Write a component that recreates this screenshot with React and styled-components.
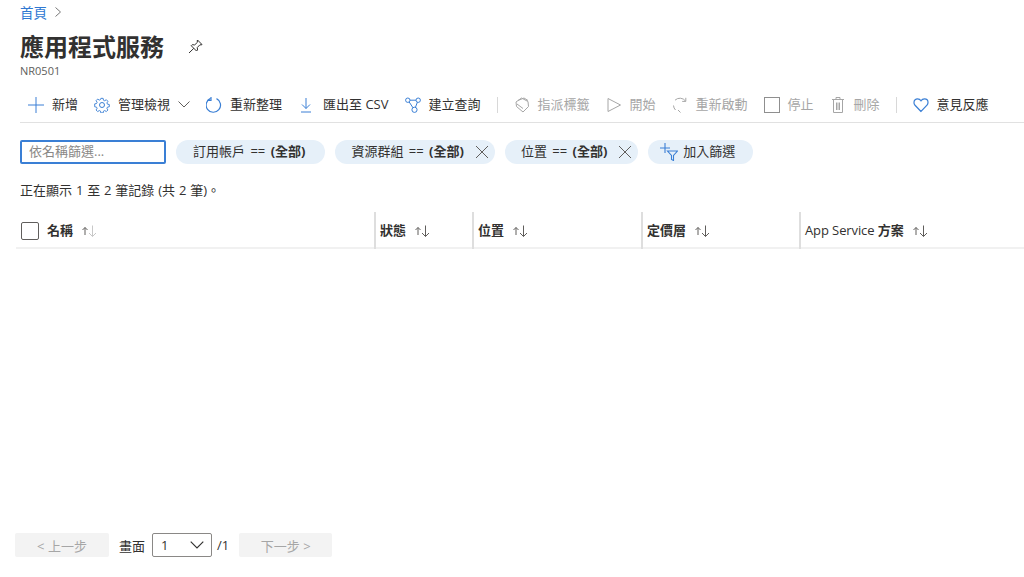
import React from "react";
import styled, { createGlobalStyle } from "styled-components";

const Global = createGlobalStyle`
    html, body {
        margin: 0;
        padding: 0;
        background: #ffffff;
    }
    body {
        font-family: "Open Sans", "Noto Sans CJK TC", sans-serif;
        font-size: 13px;
        color: #323130;
        overflow: hidden;
    }
`;

const Page = styled.div`
    width: 1024px;
    height: 577px;
    box-sizing: border-box;
    padding-left: 15px;
    display: flex;
    flex-direction: column;
`;
const Header = styled.div`
    padding-left: 5px;
    display: flex;
    flex-direction: column;
`;
const Breadcrumb = styled.div`
    height: 26px;
    padding-bottom: 2px;
    box-sizing: border-box;
    display: flex;
    align-items: center;
    gap: 8px;
    color: #2f78d2;
    font-size: 13.5px;
`;
const TitleRow = styled.div`
    height: 36px;
    box-sizing: border-box;
    padding-top: 5px;
    display: flex;
    align-items: center;
    gap: 24px;
`;
const Title = styled.h1`
    margin: 0;
    font-size: 24px;
    line-height: 31px;
    font-weight: 700;
    color: #323130;
`;
const Subtitle = styled.div`
    height: 18px;
    line-height: 18px;
    font-size: 11px;
    color: #605e5c;
`;
const Toolbar = styled.div`
    margin: 8px 0 0 5px;
    height: 33px;
    padding: 0 0 1px 8px;
    display: flex;
    align-items: center;
    gap: 16px;
    border-bottom: 1px solid #e1e1e1;
`;
const ToolItem = styled.div`
    display: flex;
    align-items: center;
    gap: ${(props) => props.$gap || 8}px;
    white-space: nowrap;
    color: ${(props) => (props.$disabled ? "#a6a6a6" : "#323130")};
`;
const ToolText = styled.span`
    position: relative;
    top: -1px;
`;
const ToolDivider = styled.div`
    width: 1px;
    height: 16px;
    background: #d8d8d8;
`;
const Filters = styled.div`
    margin: 17px 0 0 5px;
    display: flex;
    align-items: center;
    gap: 10px;
`;
const SearchBox = styled.input`
    width: 146px;
    height: 24px;
    box-sizing: border-box;
    border: 2px solid #3a7fd5;
    border-radius: 2px;
    padding: 0 7px 2px;
    font: inherit;
    outline: none;
    &::placeholder {
        color: #8a8886;
        opacity: 1;
    }
`;
const Pill = styled.div`
    height: 24px;
    box-sizing: border-box;
    padding: ${(props) => (props.$closable ? "0 6px 0 16px" : "0 20px 0 17px")};
    display: flex;
    align-items: center;
    gap: 11px;
    background: #e6f0f9;
    border-radius: 12px;
    white-space: nowrap;
    word-spacing: 2px;
    b {
        font-weight: 700;
    }
`;
const PillText = styled.span`
    padding-bottom: 3px;
`;
const AddPill = styled(Pill)`
    padding: 0 18px 0 12px;
    gap: 5px;
`;
const Info = styled.div`
    margin: 17px 0 0 5px;
    height: 18px;
    line-height: 18px;
    font-size: 13px;
    word-spacing: 0.5px;
`;
const TableHead = styled.div`
    margin: 13px 0 0 1px;
    height: 35px;
    display: grid;
    grid-template-columns: 358px 98px 169px 158px 1fr;
    border-bottom: 2px solid #f1f1f1;
`;
const HeadCell = styled.div`
    display: flex;
    align-items: center;
    gap: 7px;
    padding-left: ${(props) => (props.$first ? 5 : 4)}px;
    border-left: ${(props) => (props.$first ? "none" : "2px solid #dedede")};
    margin-bottom: -2px;
    font-weight: 600;
    font-size: 13px;
    white-space: nowrap;
`;
const HeadLabel = styled.span`
    padding-bottom: 3px;
`;
const LatinLabel = styled.span`
    font-weight: 500;
    letter-spacing: -0.1px;
`;
const Check = styled.span`
    width: 18px;
    height: 18px;
    box-sizing: border-box;
    border: 1px solid #605e5c;
    border-radius: 2px;
    margin-right: 1px;
`;
const Pager = styled.div`
    margin-top: auto;
    margin-bottom: 20px;
    display: flex;
    align-items: center;
    height: 24px;
`;
const PageButton = styled.div`
    width: ${(props) => props.$width}px;
    height: 24px;
    display: flex;
    align-items: center;
    justify-content: center;
    background: #f3f3f3;
    border-radius: 2px;
    color: #a6a6a6;
`;
const PageLabel = styled.span`
    margin: 0 7px 0 10px;
`;
const PageSelect = styled.div`
    width: 60px;
    height: 24px;
    box-sizing: border-box;
    border: 1px solid #8a8886;
    border-radius: 2px;
    padding: 0 7px 0 8px;
    display: flex;
    align-items: center;
    justify-content: space-between;
`;
const PageTotal = styled.span`
    margin: 0 10px 0 5px;
`;

const BLUE = "#3a7fd5";
const GREY = "#a6a6a6";

const Icon = ({ w = 16, h = 16, box, children, color = BLUE, sw = 1 }) => (
    <svg
        width={w}
        height={h}
        viewBox={box || `0 0 ${w} ${h}`}
        fill="none"
        stroke={color}
        strokeWidth={sw}
        style={{ flex: "none", display: "block" }}
    >
        {children}
    </svg>
);

const Chevron = ({ color = "#605e5c", w = 12, h = 7 }) => (
    <Icon w={w} h={h} box="0 0 12 7" color={color}>
        <path d="M.5.5 6 6l5.500-5.500" />
    </Icon>
);

const Cross = () => (
    <Icon w={14} h={14} color="#605e5c">
        <path d="M1 1l12 12M13 1 1 13" />
    </Icon>
);

const Sort = ({ downFaint }) => (
    <Icon w={17} h={12}>
        <path d="M5 10V2.500M2.500 5 5 2.500 7.500 5" stroke="#605e5c" />
        <path d="M12.500 .5V11.500M9 8l3.500 3.500L16 8" stroke={downFaint ? "#c8c8c8" : "#605e5c"} />
    </Icon>
);

const tools = [
    {
        label: "新增",
        icon: (
            <Icon>
                <path d="M8 0v16M0 8h16" />
            </Icon>
        ),
    },
    {
        label: "管理檢視",
        after: <Chevron />,
        icon: (
            <Icon>
                <circle cx="8" cy="8" r="2.500" />
                <path d="M6.800.8h2.400l.4 2 1.300.6 1.800-1.100 1.700 1.700-1.100 1.800.6 1.300 2 .4v2.400l-2 .4-.6 1.300 1.100 1.800-1.700 1.700-1.800-1.100-1.300.6-.4 2H6.800l-.4-2-1.300-.6-1.800 1.100-1.700-1.700 1.100-1.800-.6-1.300-2-.4V6.800l2-.4.6-1.300-1.100-1.800 1.700-1.700 1.800 1.100 1.300-.6z" transform="translate(.6 .6) scale(.925)" />
            </Icon>
        ),
    },
    {
        label: "重新整理",
        icon: (
            <Icon sw={1.2}>
                <path d="M10.500 1.600A7.200 7.200 0 1 1 4.600 1.400" />
                <path d="M5 .5V4H1.600" transform="translate(0 -.5)" />
            </Icon>
        ),
    },
    {
        label: "匯出至 CSV",
        gap: 9,
        icon: (
            <Icon>
                <path d="M8 1v10.500M4 7.500l4 4 4-4M3 15h10" />
            </Icon>
        ),
    },
    {
        label: "建立查詢",
        icon: (
            <Icon>
                <circle cx="2.800" cy="3.200" r="2.200" />
                <circle cx="13.200" cy="3.200" r="2.200" />
                <circle cx="9.500" cy="12.800" r="2.600" />
                <path d="M5 3.200h6M4.200 5l3.800 5.800M12.400 5.200l-2 5.200" />
            </Icon>
        ),
    },
    { divider: true },
    {
        label: "指派標籤",
        disabled: true,
        icon: (
            <Icon color={GREY}>
                <path d="M7.500 1 14 4.500l.5 5L9 15 2.500 9.500 2 5z" />
                <path d="M4 3.500 10 1l4 2.500M3 7l6 4.500" />
            </Icon>
        ),
    },
    {
        label: "開始",
        disabled: true,
        icon: (
            <Icon color={GREY}>
                <path d="M2 1.500v13L14.500 8z" />
            </Icon>
        ),
    },
    {
        label: "重新啟動",
        disabled: true,
        icon: (
            <Icon color={GREY}>
                <path d="M13.500 4A7 7 0 0 0 3 3.200M1.500 8.500a7 7 0 0 0 2 4.500" />
                <path d="M13.800.8V4.400H10.200" />
                <path d="M6 13l2.500 2.500" />
            </Icon>
        ),
    },
    {
        label: "停止",
        disabled: true,
        icon: (
            <Icon color="#8f8f8f">
                <rect x=".5" y=".5" width="15" height="15" />
            </Icon>
        ),
    },
    {
        label: "刪除",
        disabled: true,
        icon: (
            <Icon color={GREY}>
                <path d="M3.500 3v12.500h9V3M2 2.500h12M6 2.500V.5h4v2M6.500 5.500v7.500M8 5.500v7.500M9.500 5.500v7.500" />
            </Icon>
        ),
    },
    { divider: true },
    {
        label: "意見反應",
        icon: (
            <Icon sw={1.2}>
                <path d="M8 14.500 1.800 8A4 4 0 0 1 1 5.200C1 3 2.800 1.800 4.500 1.800c1.400 0 2.700.7 3.500 2 .8-1.300 2.100-2 3.500-2C13.200 1.800 15 3 15 5.200c0 1-.3 2-.8 2.800z" />
            </Icon>
        ),
    },
];

const App = () => {
    return (
        <Page>
            <Global />
            <Header>
                <Breadcrumb>
                    首頁
                    <Icon w={6} h={10} color="#777777">
                        <path d="M.5.5 5.500 5l-5 4.500" />
                    </Icon>
                </Breadcrumb>
                <TitleRow>
                    <Title>應用程式服務</Title>
                    <Icon w={15} h={15} color="#323130">
                        <path d="M9.500 1 14 5.500l-1 .5-1-.3L9.300 8.500l.2 2.500-1 1L3.200 6.700l1-1 2.500.2L9.500 3.200 9.200 2z" />
                        <path d="M5.800 9.300 1 14" />
                    </Icon>
                </TitleRow>
                <Subtitle>NR0501</Subtitle>
            </Header>

            <Toolbar>
                {tools.map((tool, index) =>
                    tool.divider ? (
                        <ToolDivider key={index} />
                    ) : (
                        <ToolItem key={index} $disabled={tool.disabled} $gap={tool.gap}>
                            {tool.icon}
                            <ToolText>{tool.label}</ToolText>
                            {tool.after}
                        </ToolItem>
                    )
                )}
            </Toolbar>

            <Filters>
                <SearchBox placeholder="依名稱篩選..." />
                <Pill>
                    <PillText>
                        訂用帳戶 == <b>(全部)</b>
                    </PillText>
                </Pill>
                <Pill $closable>
                    <PillText>
                        資源群組 == <b>(全部)</b>
                    </PillText>
                    <Cross />
                </Pill>
                <Pill $closable>
                    <PillText>
                        位置 == <b>(全部)</b>
                    </PillText>
                    <Cross />
                </Pill>
                <AddPill>
                    <Icon w={18} h={18} sw={1.1}>
                        <path d="M5 0v10M0 5h10" />
                        <path d="M7.500 8h10l-4 4.500v5l-2-1v-4z" />
                    </Icon>
                    <PillText>加入篩選</PillText>
                </AddPill>
            </Filters>

            <Info>正在顯示 1 至 2 筆記錄 (共 2 筆)。</Info>

            <TableHead>
                <HeadCell $first>
                    <Check />
                    <HeadLabel>名稱</HeadLabel>
                    <Sort downFaint />
                </HeadCell>
                <HeadCell>
                    <HeadLabel>狀態</HeadLabel>
                    <Sort />
                </HeadCell>
                <HeadCell>
                    <HeadLabel>位置</HeadLabel>
                    <Sort />
                </HeadCell>
                <HeadCell>
                    <HeadLabel>定價層</HeadLabel>
                    <Sort />
                </HeadCell>
                <HeadCell>
                    <HeadLabel>
                        <LatinLabel>App Service</LatinLabel> 方案
                    </HeadLabel>
                    <Sort />
                </HeadCell>
            </TableHead>

            <Pager>
                <PageButton $width={94}>&lt; 上一步</PageButton>
                <PageLabel>畫面</PageLabel>
                <PageSelect>
                    1
                    <Chevron color="#323130" w={14} h={8} />
                </PageSelect>
                <PageTotal>/1</PageTotal>
                <PageButton $width={93}>下一步 &gt;</PageButton>
            </Pager>
        </Page>
    );
};

export default App;
